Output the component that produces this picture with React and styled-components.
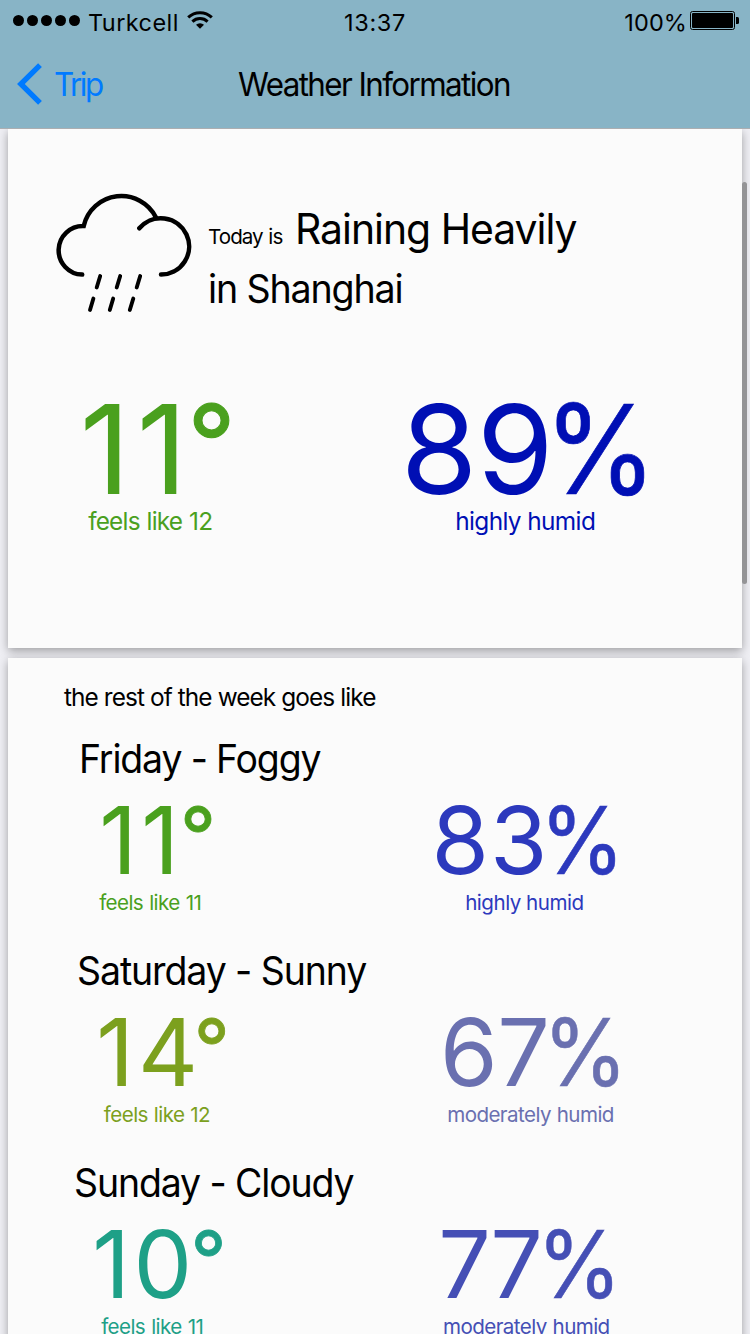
import React from 'react';
import styled, { createGlobalStyle } from 'styled-components';

const GlobalStyle = createGlobalStyle`
  * { box-sizing: border-box; }
  body {
    margin: 0;
    background: #efeff4;
    font-family: Inter, 'Liberation Sans', sans-serif;
    color: #000;
  }
`;

const Screen = styled.div`
  position: relative;
  width: 750px;
  height: 1334px;
  overflow: hidden;
  display: flex;
  flex-direction: column;
`;

const Header = styled.header`
  position: relative;
  z-index: 1;
  flex: none;
  height: 129px;
  background: #88b4c6;
  border-bottom: 1px solid #acaeb1;
`;

const StatusBar = styled.div`
  display: grid;
  grid-template-columns: 1fr auto 1fr;
  align-items: center;
  height: 41px;
  padding: 0 11px;
`;

const StatusGroup = styled.div`
  display: flex;
  align-items: center;
  justify-content: ${(p) => (p.$end ? 'flex-end' : 'flex-start')};
`;

const Dots = styled.div`
  display: flex;
  gap: 3px;
  margin: 0 8px 0 2px;
`;

const Dot = styled.span`
  width: 11px;
  height: 11px;
  border-radius: 50%;
  background: #000;
`;

const Label = styled.span`
  display: block;
  flex: none;
  white-space: pre;
  font-size: ${(p) => p.$size}px;
  line-height: ${(p) => p.$line}px;
  letter-spacing: ${(p) => p.$track || 0}px;
  word-spacing: ${(p) => p.$word || 0}px;
  margin-left: ${(p) => p.$left || 0}px;
  margin-top: ${(p) => p.$top || 0}px;
  ${(p) => p.$narrow && `transform: scaleX(${p.$narrow}); transform-origin: left center;`}
`;

const StatusText = styled(Label).attrs({ $size: 23.5, $line: 36, $top: 5 })``;

const Degree = styled.span`
  display: inline-block;
  line-height: 0;
  font-size: 0.85em;
  vertical-align: 0.13em;
  letter-spacing: 0;
  -webkit-text-stroke: 0.01em currentColor;
  margin-left: ${(p) => p.$gap}px;
`;

const Percent = styled.span`
  display: inline-block;
  line-height: 0;
  letter-spacing: 0;
  -webkit-text-stroke: 0.006em currentColor;
  transform: scaleX(0.926);
  transform-origin: left center;
  margin-left: ${(p) => p.$gap}px;
`;

const NavBar = styled.nav`
  display: grid;
  grid-template-columns: 239px 1fr;
  align-items: center;
  height: 86px;
`;

const BackButton = styled.a`
  display: flex;
  align-items: center;
  padding-left: 17px;
  color: #007aff;
`;

const WifiIcon = styled.svg`
  margin-left: 8px;
`;

const BatteryIcon = styled.svg`
  margin-left: 2px;
`;

const Content = styled.main`
  flex: none;
  padding: 0 8px;
  display: flex;
  flex-direction: column;
  gap: 10px;
`;

const Card = styled.section`
  height: ${(p) => p.$height}px;
  padding-top: ${(p) => p.$pad}px;
  background: #fbfbfb;
  box-shadow: 0 3px 9px rgba(0, 0, 0, 0.34);
`;

const Summary = styled.div`
  display: flex;
  padding-left: 46px;
`;

const Sentence = styled.div`
  display: flex;
  flex-direction: column;
  padding-left: 14px;
`;

const SentenceLine = styled.div`
  display: flex;
  align-items: baseline;
  height: 60px;
`;

const Readings = styled.div`
  display: grid;
  grid-template-columns: 367px 367px;
`;

const Reading = styled.div`
  color: ${(p) => p.$color};
`;

const Day = styled.article`
  height: 212px;
`;

const ScrollThumb = styled.div`
  position: absolute;
  top: 182px;
  right: 3px;
  width: 5px;
  height: 402px;
  border-radius: 2.5px;
  background: #949496;
`;

const RainCloud = () => (
  <svg width="140" height="124" viewBox="54 192 140 124" fill="none" stroke="#000" strokeLinecap="round">
    <g strokeWidth="4.5">
      <path d="M82.2 274.6A24.3 24.3 0 1 1 83.7 226A38.7 38.7 0 0 1 156 217.4" />
      <path d="M139.3 228.3A28.2 28.2 0 1 1 161 274.6" />
    </g>
    <path
      strokeWidth="3.9"
      d="M100.2 276L96.7 287.5M120.2 276L116.7 287.5M140.2 276L136.7 287.5M93.4 298.5L90 310M113.2 298.5L109.8 310M133.3 298.5L129.8 310"
    />
  </svg>
);

const Wifi = () => (
  <WifiIcon width="26" height="21" viewBox="187 10 26 21" fill="none" stroke="#000" strokeWidth="3">
    <path d="M188.2 17.4A17 17 0 0 1 211.8 17.4" />
    <path d="M192.4 21.6A11 11 0 0 1 207.6 21.6" />
    <path d="M200 28.8L196 24.8A5.7 5.7 0 0 1 204 24.8Z" fill="#000" stroke="none" />
  </WifiIcon>
);

const Battery = () => (
  <BatteryIcon width="50" height="21" viewBox="689 10 50 21">
    <rect x="690.5" y="11.5" width="44" height="18" rx="2" fill="none" stroke="#000" />
    <rect x="692" y="13" width="41" height="15" rx="1" />
    <path d="M736 17H737.5Q739 17 739 18.5V22.5Q739 24 737.5 24H736Z" />
  </BatteryIcon>
);

const Chevron = () => (
  <svg width="26" height="42" viewBox="17 63 26 42" fill="none" stroke="#007aff" strokeWidth="5.4">
    <path d="M40 65.2L20.9 84L40 102.8" />
  </svg>
);

const days = [
  {
    title: { text: 'Friday - Foggy', left: 71.2, track: -1.2 },
    temp: { color: '#4aa01e', digits: '11', left: 91.2, track: 4.2, gap: -3.2 },
    feels: { text: 'feels like 11', left: 91.2, track: -0.6, word: 0.9 },
    humidity: { color: '#2c39bd', digits: '83', left: 56.6, track: 0.9, gap: -8.6 },
    humid: { text: 'highly humid', left: 90.2, track: -0.5, word: 0 },
  },
  {
    title: { text: 'Saturday - Sunny', left: 69.2, track: -1.13 },
    temp: { color: '#7ca01e', digits: '14', left: 88.2, track: 4, gap: -8.3 },
    feels: { text: 'feels like 12', left: 95.8, track: -0.55, word: 0.6 },
    humidity: { color: '#6a70b0', digits: '67', left: 64.9, track: -0.3, gap: -7 },
    humid: { text: 'moderately humid', left: 72.2, track: -0.58, word: 0.6 },
  },
  {
    title: { text: 'Sunday - Cloudy', left: 65.5, track: -1.16 },
    temp: { color: '#1ea087', digits: '10', left: 84.2, track: 3.6, gap: -5.3 },
    feels: { text: 'feels like 11', left: 93.2, track: -0.6, word: 0.9 },
    humidity: { color: '#454fb5', digits: '77', left: 63.3, track: -2.5, gap: -3.8 },
    humid: { text: 'moderately humid', left: 68, track: -0.58, word: 0.6 },
  },
];

const DayReading = ({ value, note, percent }) => (
  <Reading $color={value.color}>
    <Label $size={93} $line={82} $left={value.left} $track={value.track}>
      {value.digits}
      {percent ? <Percent $gap={value.gap}>%</Percent> : <Degree $gap={value.gap}>°</Degree>}
    </Label>
    <Label $size={20.6} $line={43} $left={note.left} $track={note.track} $word={note.word}>
      {note.text}
    </Label>
  </Reading>
);

export default function App() {
  return (
    <>
      <GlobalStyle />
      <Screen>
        <Header>
          <StatusBar>
            <StatusGroup>
              <Dots>
                {[0, 1, 2, 3, 4].map((n) => (
                  <Dot key={n} />
                ))}
              </Dots>
              <StatusText $track={0.42}>Turkcell</StatusText>
              <Wifi />
            </StatusGroup>
            <StatusText $track={0.7}>13:37</StatusText>
            <StatusGroup $end>
              <StatusText $track={0.1}>100%</StatusText>
              <Battery />
            </StatusGroup>
          </StatusBar>
          <NavBar>
            <BackButton>
              <Chevron />
              <Label $size={33} $line={44} $left={10.5} $track={-2.6} $narrow={0.95}>Trip</Label>
            </BackButton>
            <Label $size={33} $line={44} $left={-0.6} $track={-1.68} $narrow={0.95}>Weather Information</Label>
          </NavBar>
        </Header>
        <Content>
          <Card $height={519} $pad={63}>
            <Summary>
              <RainCloud />
              <Sentence>
                <SentenceLine>
                  <Label $size={20.6} $line={75} $track={-0.95} $word={0.8}>Today is</Label>
                  <Label $size={41.7} $line={75} $left={12.9} $track={-1.02} $narrow={0.98}>Raining Heavily</Label>
                </SentenceLine>
                <SentenceLine>
                  <Label $size={39.2} $line={73} $track={-1.2} $narrow={0.96}>in Shanghai</Label>
                </SentenceLine>
              </Sentence>
            </Summary>
            <Readings>
              <Reading $color="#4aa01e">
                <Label $size={124} $line={120} $top={73} $left={71.8} $track={6.4}>
                  11<Degree $gap={-6.1}>°</Degree>
                </Label>
                <Label $size={24.4} $line={30} $top={-3} $left={80.2} $track={-0.8} $word={0.8}>feels like 12</Label>
              </Reading>
              <Reading $color="#000fb4">
                <Label $size={124} $line={120} $top={73} $left={25.7} $track={-0.7}>
                  89<Percent $gap={-8.5}>%</Percent>
                </Label>
                <Label $size={24.4} $line={30} $top={-3} $left={80.2} $track={-0.61}>highly humid</Label>
              </Reading>
            </Readings>
          </Card>
          <Card $height={800} $pad={19}>
            <Label $size={24.4} $line={41} $left={56} $track={-0.91}>the rest of the week goes like</Label>
            {days.map((day) => (
              <Day key={day.title.text}>
                <Label $size={39} $line={81} $left={day.title.left} $track={day.title.track} $narrow={0.96}>
                  {day.title.text}
                </Label>
                <Readings>
                  <DayReading value={day.temp} note={day.feels} />
                  <DayReading value={day.humidity} note={day.humid} percent />
                </Readings>
              </Day>
            ))}
          </Card>
        </Content>
        <ScrollThumb />
      </Screen>
    </>
  );
}
